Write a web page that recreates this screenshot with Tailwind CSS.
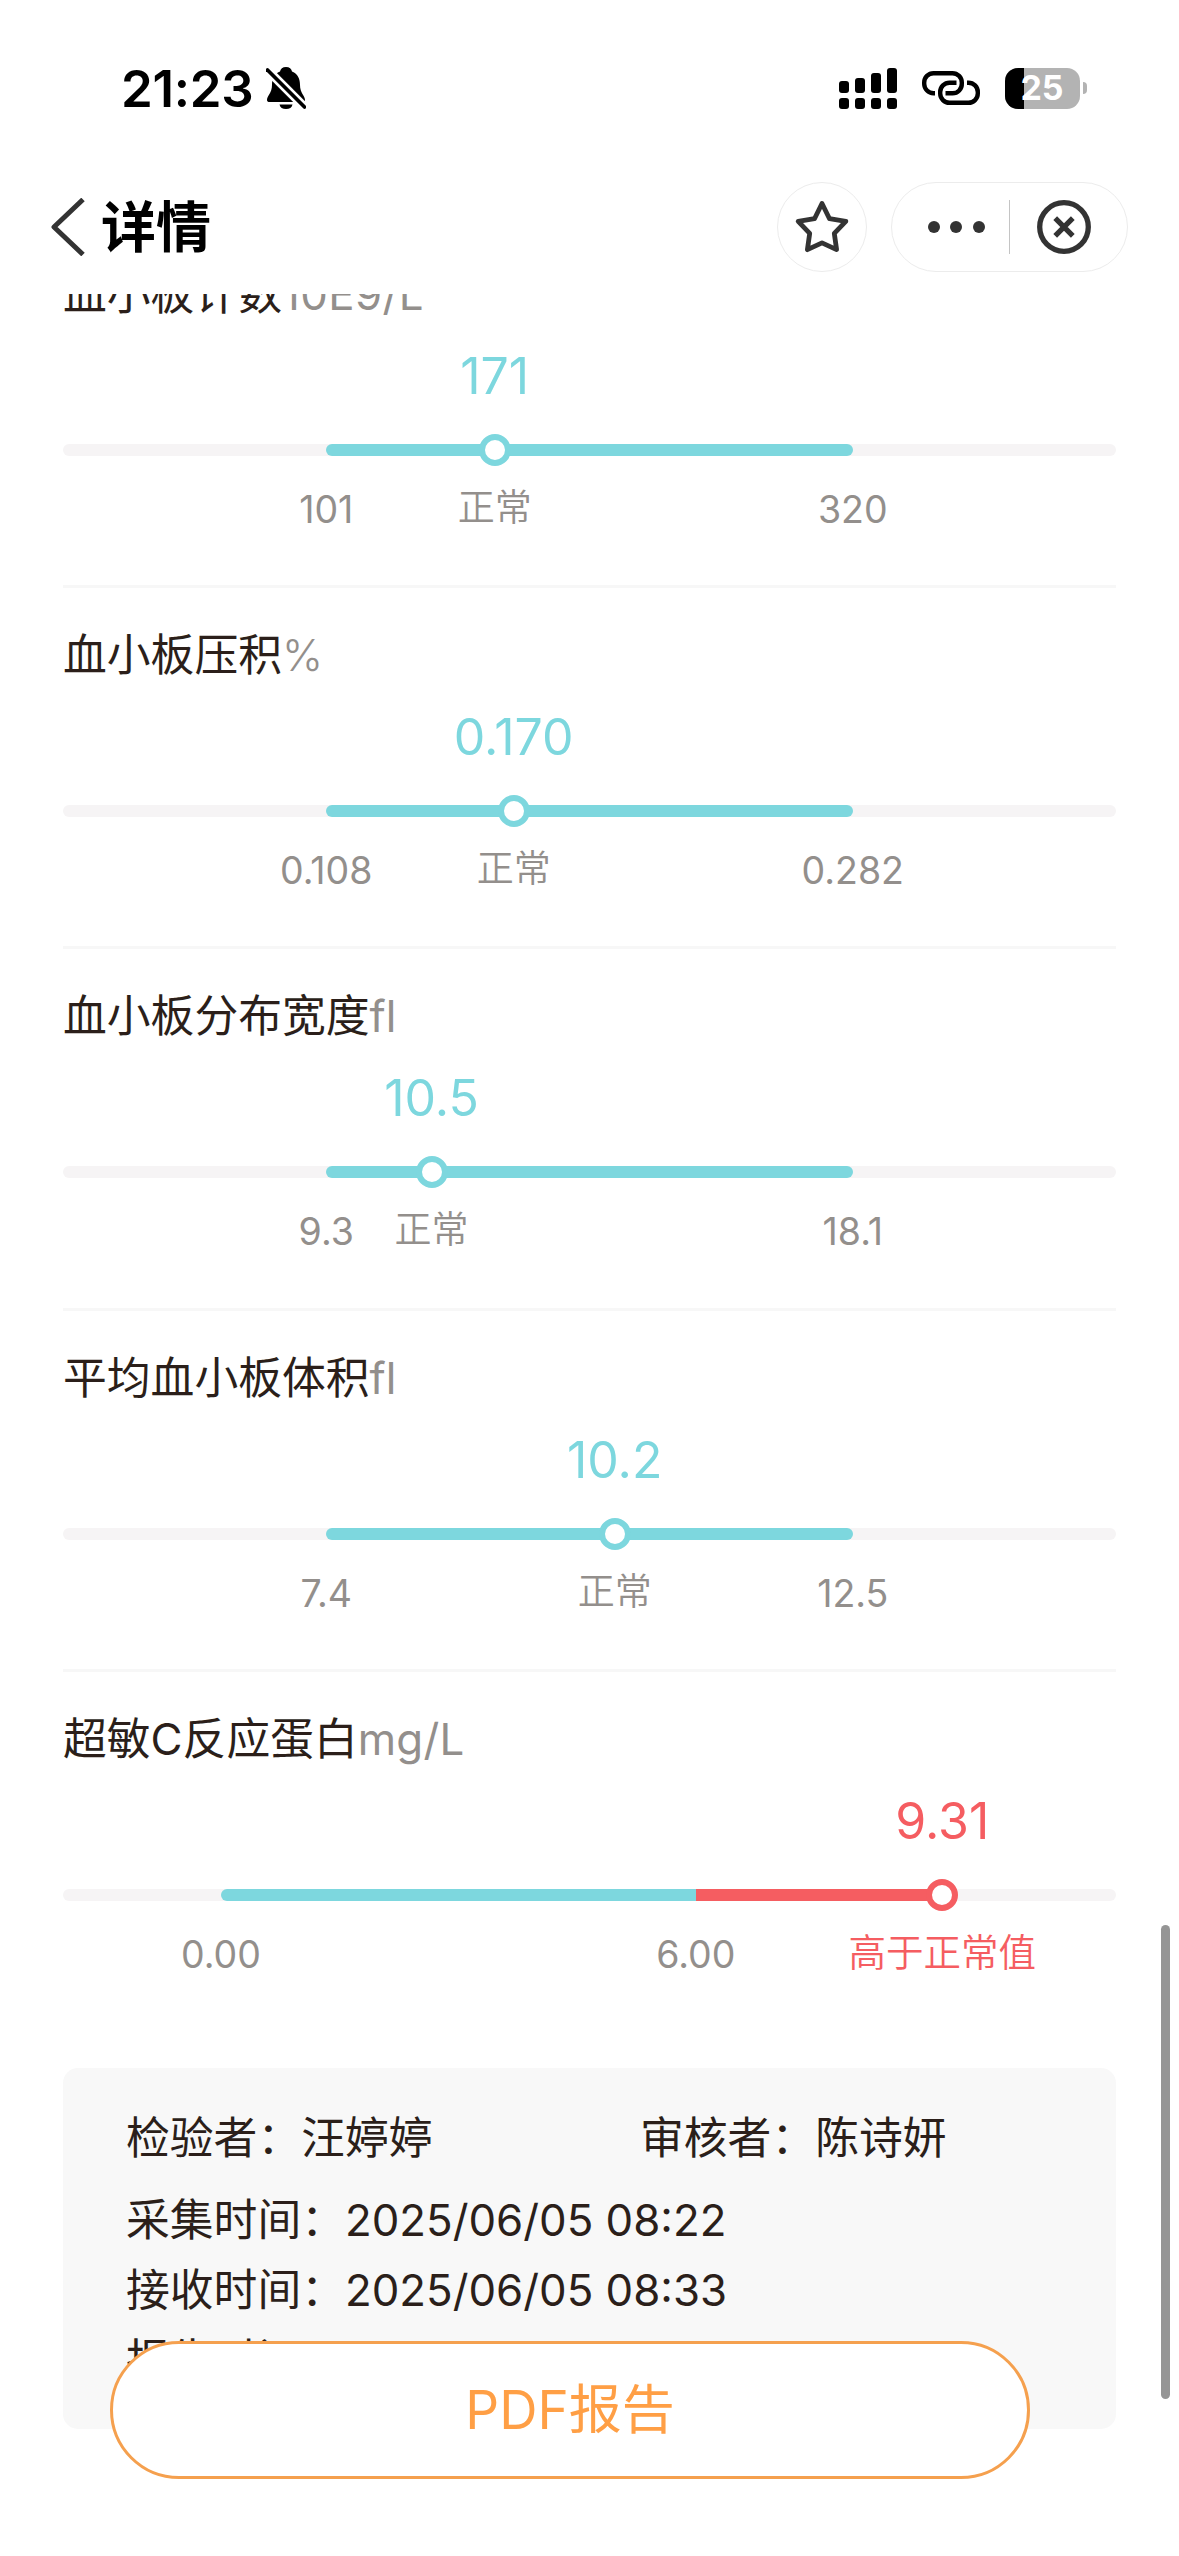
<!DOCTYPE html>
<html lang="zh-CN">
<head>
    <meta charset="UTF-8">
    <meta name="viewport" content="width=device-width, initial-scale=1.0">
    <title>详情</title>
    <script src="https://cdn.jsdelivr.net/npm/@tailwindcss/browser@4"></script>
</head>
<body class="bg-white font-['Inter','Noto_Sans_CJK_SC',sans-serif] text-[#2b1f1a]">
    <div class="relative w-[1179px] h-[2556px] overflow-hidden flex flex-col">

        <header class="relative z-10 h-[294px] shrink-0 bg-white">
            <!-- Status bar -->
            <div class="h-[176px] pl-[121px] pr-[92px] flex items-center justify-between text-black">
                <div class="flex items-center gap-[13px]">
                    <span class="text-[51px] leading-none font-semibold tracking-[-0.3px]">21:23</span>
                    <svg class="w-[40px] h-[44px]" viewBox="0 0 40 44">
                        <path d="M20 1C16.500 1 14.500 3 14 5.500C8 8 6 13 6 19C6 27 1 30 1 34C1 35.500 2 36 3.500 36H36.500C38 36 39 35.500 39 34C39 30 34 27 34 19C34 13 32 8 26 5.500C25.500 3 23.500 1 20 1Z" fill="black"/>
                        <path d="M13.500 38.500H26.500C26 41.500 23.500 43 20 43C16.500 43 14 41.500 13.500 38.500Z" fill="black"/>
                        <path d="M0 2.500L40 42.500" stroke="white" stroke-width="9"/>
                        <path d="M1.500 4L38.500 41" stroke="black" stroke-width="3.800" stroke-linecap="round"/>
                    </svg>
                </div>
                <div class="flex items-center">
                    <svg class="w-[58px] h-[41px]" viewBox="0 0 58 41">
                        <rect x="0" y="13" width="10" height="12" rx="3"/>
                        <rect x="16" y="10" width="10" height="15" rx="3"/>
                        <rect x="32" y="5" width="10" height="20" rx="3"/>
                        <rect x="48" y="0" width="10" height="25" rx="3"/>
                        <rect x="0" y="30" width="10" height="11" rx="3"/>
                        <rect x="16" y="30" width="10" height="11" rx="3"/>
                        <rect x="32" y="30" width="10" height="11" rx="3"/>
                        <rect x="48" y="30" width="10" height="11" rx="3"/>
                    </svg>
                    <svg class="w-[58px] h-[34px] ml-[25px]" viewBox="0 0 58 34" fill="none" stroke="black" stroke-width="4.400">
                        <path d="M13 22.300H11.500A9.500 9.500 0 0 1 2.200 13V11.500A9.300 9.300 0 0 1 11.500 2.200H30.500A9.300 9.300 0 0 1 39.800 11.500V12.500A9.300 9.300 0 0 1 30.500 22.300H23.500"/>
                        <path d="M34.500 11.700H27.500A9.300 9.300 0 0 0 18.200 21V22.500A9.300 9.300 0 0 0 27.500 31.800H46.500A9.300 9.300 0 0 0 55.800 22.500V21A9.300 9.300 0 0 0 46.500 11.700H45"/>
                    </svg>
                    <div class="relative ml-[25px] w-[75px] h-[41px] rounded-[13px] overflow-hidden bg-[#b3b3b3] flex items-center justify-center">
                        <div class="absolute left-0 top-0 w-[19px] h-full bg-black"></div>
                        <span class="relative -ml-[1px] text-[34px] leading-none font-bold text-white">25</span>
                    </div>
                    <div class="ml-[3px] w-[4px] h-[12px] rounded-r-full bg-[#b3b3b3]"></div>
                </div>
            </div>

            <!-- Title bar -->
            <div class="h-[101px] pl-[50px] pr-[51px] flex items-center">
                <svg class="w-[35px] h-[58px]" viewBox="0 0 35 58" fill="none" stroke="#333" stroke-width="5">
                    <path d="M33 1.500L4 29L33 56.500" stroke-linejoin="round"/>
                </svg>
                <h1 class="ml-[16px] pt-[2px] text-[55px] leading-none font-bold text-black">详情</h1>
                <div class="ml-auto w-[90px] h-[90px] rounded-full border-[1.5px] border-[#ececec] flex items-center justify-center">
                    <svg class="w-[56px] h-[56px]" viewBox="0 0 56 56" fill="none" stroke="#333" stroke-width="4.800" stroke-linejoin="round">
                        <path d="M28 4.500L35.500 19.700L51.800 22.300L40.300 34.400L42.600 50.700L28 43.800L13.400 50.700L15.700 34.400L4.200 22.300L20.500 19.700Z"/>
                    </svg>
                </div>
                <div class="ml-[24px] w-[237px] h-[90px] rounded-full border-[1.5px] border-[#ececec] flex items-center">
                    <div class="ml-[36px] flex gap-[10.300px]">
                        <span class="w-[12px] h-[12px] rounded-full bg-[#333]"></span>
                        <span class="w-[12px] h-[12px] rounded-full bg-[#333]"></span>
                        <span class="w-[12px] h-[12px] rounded-full bg-[#333]"></span>
                    </div>
                    <span class="ml-[24px] w-px h-[54px] bg-[#c4c4c4]"></span>
                    <svg class="ml-[27px] w-[54px] h-[54px]" viewBox="0 0 54 54" fill="none" stroke="#333" stroke-width="5.300">
                        <circle cx="27" cy="27" r="24.300"/>
                        <path d="M18.200 18.200L35.800 35.800M35.800 18.200L18.200 35.800"/>
                    </svg>
                </div>
            </div>
        </header>

        <main class="-mt-[67.300px] px-[63px]">
            <section class="h-[361.330px] border-b-3 border-[#f7f7f7] pt-[38px]">
                <h2 class="h-[60px] text-[43.800px] leading-[60px] whitespace-nowrap">血小板计数<span class="text-[#938f8c] tracking-[0.4px]">10E9/L</span></h2>
                <div class="relative mt-[119px] h-[12px] rounded-full bg-[#f6f4f5]">
                    <div class="absolute h-full rounded-full bg-[#7dd7de]" style="left: 25%; width: 50%"></div>
                    <span class="absolute -top-[98px] -translate-x-1/2 text-[50px] leading-[60px] text-[#7dd7de]" style="left: 41%">171</span>
                    <span class="absolute -top-[10px] -translate-x-1/2 w-[32px] h-[32px] rounded-full border-6 border-[#7dd7de] bg-white" style="left: 41%"></span>
                    <span class="absolute top-[36px] -translate-x-1/2 text-[37.500px] leading-[60px] text-[#938f8c]" style="left: 25%">101</span>
                    <span class="absolute top-[34px] -translate-x-1/2 text-[37px] leading-[60px] whitespace-nowrap font-[350] text-[#938f8c]" style="left: 41%">正常</span>
                    <span class="absolute top-[36px] -translate-x-1/2 text-[37.500px] leading-[60px] text-[#938f8c]" style="left: 75%">320</span>
                </div>
            </section>

            <section class="h-[361.330px] border-b-3 border-[#f7f7f7] pt-[38px]">
                <h2 class="h-[60px] text-[43.800px] leading-[60px] whitespace-nowrap">血小板压积<span class="text-[#938f8c] font-light">%</span></h2>
                <div class="relative mt-[119px] h-[12px] rounded-full bg-[#f6f4f5]">
                    <div class="absolute h-full rounded-full bg-[#7dd7de]" style="left: 25%; width: 50%"></div>
                    <span class="absolute -top-[98px] -translate-x-1/2 text-[50px] leading-[60px] text-[#7dd7de]" style="left: 42.8%">0.170</span>
                    <span class="absolute -top-[10px] -translate-x-1/2 w-[32px] h-[32px] rounded-full border-6 border-[#7dd7de] bg-white" style="left: 42.8%"></span>
                    <span class="absolute top-[36px] -translate-x-1/2 text-[37.500px] leading-[60px] text-[#938f8c]" style="left: 25%">0.108</span>
                    <span class="absolute top-[34px] -translate-x-1/2 text-[37px] leading-[60px] whitespace-nowrap font-[350] text-[#938f8c]" style="left: 42.8%">正常</span>
                    <span class="absolute top-[36px] -translate-x-1/2 text-[37.500px] leading-[60px] text-[#938f8c]" style="left: 75%">0.282</span>
                </div>
            </section>

            <section class="h-[361.330px] border-b-3 border-[#f7f7f7] pt-[38px]">
                <h2 class="h-[60px] text-[43.800px] leading-[60px] whitespace-nowrap">血小板分布宽度<span class="text-[#938f8c]">fl</span></h2>
                <div class="relative mt-[119px] h-[12px] rounded-full bg-[#f6f4f5]">
                    <div class="absolute h-full rounded-full bg-[#7dd7de]" style="left: 25%; width: 50%"></div>
                    <span class="absolute -top-[98px] -translate-x-1/2 text-[50px] leading-[60px] text-[#7dd7de]" style="left: 35%">10.5</span>
                    <span class="absolute -top-[10px] -translate-x-1/2 w-[32px] h-[32px] rounded-full border-6 border-[#7dd7de] bg-white" style="left: 35%"></span>
                    <span class="absolute top-[36px] -translate-x-1/2 text-[37.500px] leading-[60px] text-[#938f8c]" style="left: 25%">9.3</span>
                    <span class="absolute top-[34px] -translate-x-1/2 text-[37px] leading-[60px] whitespace-nowrap font-[350] text-[#938f8c]" style="left: 35%">正常</span>
                    <span class="absolute top-[36px] -translate-x-1/2 text-[37.500px] leading-[60px] text-[#938f8c]" style="left: 75%">18.1</span>
                </div>
            </section>

            <section class="h-[361.330px] border-b-3 border-[#f7f7f7] pt-[38px]">
                <h2 class="h-[60px] text-[43.800px] leading-[60px] whitespace-nowrap">平均血小板体积<span class="text-[#938f8c]">fl</span></h2>
                <div class="relative mt-[119px] h-[12px] rounded-full bg-[#f6f4f5]">
                    <div class="absolute h-full rounded-full bg-[#7dd7de]" style="left: 25%; width: 50%"></div>
                    <span class="absolute -top-[98px] -translate-x-1/2 text-[50px] leading-[60px] text-[#7dd7de]" style="left: 52.4%">10.2</span>
                    <span class="absolute -top-[10px] -translate-x-1/2 w-[32px] h-[32px] rounded-full border-6 border-[#7dd7de] bg-white" style="left: 52.4%"></span>
                    <span class="absolute top-[36px] -translate-x-1/2 text-[37.500px] leading-[60px] text-[#938f8c]" style="left: 25%">7.4</span>
                    <span class="absolute top-[34px] -translate-x-1/2 text-[37px] leading-[60px] whitespace-nowrap font-[350] text-[#938f8c]" style="left: 52.4%">正常</span>
                    <span class="absolute top-[36px] -translate-x-1/2 text-[37.500px] leading-[60px] text-[#938f8c]" style="left: 75%">12.5</span>
                </div>
            </section>

            <!-- Above the normal range -->
            <section class="h-[361.330px] pt-[38px]">
                <h2 class="h-[60px] text-[43.800px] leading-[60px] whitespace-nowrap">超敏C反应蛋白<span class="text-[#938f8c] tracking-[0.2px]">mg/L</span></h2>
                <div class="relative mt-[119px] h-[12px] rounded-full bg-[#f6f4f5]">
                    <div class="absolute h-full rounded-l-full bg-[#7dd7de]" style="left: 15%; width: 45.1%"></div>
                    <div class="absolute h-full bg-[#f55d61]" style="left: 60.1%; width: 23.4%"></div>
                    <span class="absolute -top-[98px] -translate-x-1/2 text-[50px] leading-[60px] text-[#f55d61]" style="left: 83.5%">9.31</span>
                    <span class="absolute -top-[10px] -translate-x-1/2 w-[32px] h-[32px] rounded-full border-6 border-[#f55d61] bg-white" style="left: 83.5%"></span>
                    <span class="absolute top-[36px] -translate-x-1/2 text-[37.500px] leading-[60px] text-[#938f8c]" style="left: 15%">0.00</span>
                    <span class="absolute top-[36px] -translate-x-1/2 text-[37.500px] leading-[60px] text-[#938f8c]" style="left: 60.1%">6.00</span>
                    <span class="absolute top-[34px] -translate-x-1/2 text-[37.500px] leading-[60px] whitespace-nowrap font-[350] text-[#f55d61]" style="left: 83.5%">高于正常值</span>
                </div>
            </section>

            <!-- Report info -->
            <div class="mt-[35px] h-[361px] rounded-[15px] bg-[#f8f8f8] pt-[36px] px-[63px] text-[43.800px] leading-[70px] whitespace-nowrap">
                <div class="flex mb-[12px]">
                    <p class="w-[514px]">检验者：汪婷婷</p>
                    <p>审核者：陈诗妍</p>
                </div>
                <p>采集时间：2025/06/05 08:22</p>
                <p>接收时间：2025/06/05 08:33</p>
                <p>报告时间：2025/06/05 08:49</p>
            </div>
        </main>

        <button class="absolute left-[110px] top-[2341px] w-[920px] h-[138px] rounded-full border-3 border-[#f5a04e] bg-white pt-[2px] text-[53px] text-[#ff9f45]">PDF报告</button>

        <div class="absolute left-[1161px] top-[1925px] w-[9px] h-[474px] rounded-full bg-[#959595]"></div>
    </div>
</body>
</html>
